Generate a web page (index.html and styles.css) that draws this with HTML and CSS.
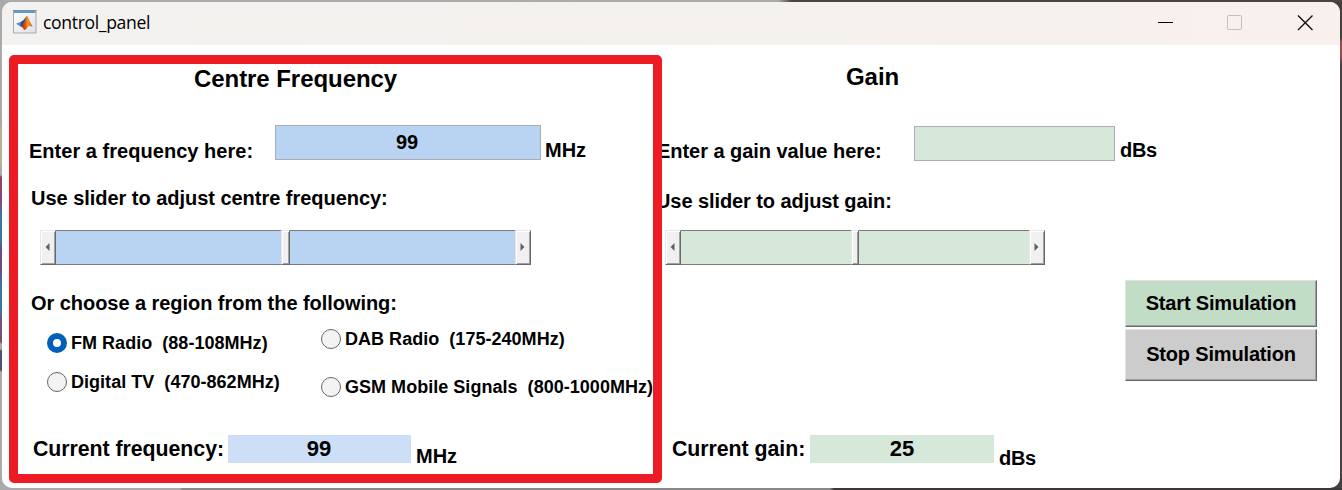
FILE: index.html
```html
<!DOCTYPE html>
<html lang="en">
<head>
<meta charset="utf-8">
<title>control_panel</title>
<link rel="stylesheet" href="styles.css">
</head>
<body>
<main class="window">
  <header class="titlebar">
    <svg class="app-icon" width="24" height="24" viewBox="0 0 24 24">
      <defs>
        <linearGradient id="tile" x1="0" y1="0" x2="1" y2="1"><stop offset="0" stop-color="#fff"/><stop offset="1" stop-color="#dde1e6"/></linearGradient>
        <linearGradient id="flame" x1="0" y1="0" x2="1" y2="0"><stop offset="0" stop-color="#8c1f12"/><stop offset=".4" stop-color="#d9531c"/><stop offset=".62" stop-color="#f5a12c"/><stop offset="1" stop-color="#c63a17"/></linearGradient>
      </defs>
      <rect x=".5" y=".5" width="22.500" height="22.500" fill="url(#tile)" stroke="#a5a9ae"/>
      <rect x="0" y="0" width="23.500" height="1" fill="#7d8f9f"/>
      <rect x="1" y="1" width="21.500" height="2" fill="#5f9bc8"/>
      <path d="M3 13.800 8 11.800 10.500 14 7.500 16.500Z" fill="#4a8fc0"/>
      <path d="M8 11.800C10.500 11 12 8 13.800 6L12 15.500 7.500 16.500Z" fill="#264f88"/>
      <path d="M13.800 5.800C15.500 6.500 17 13 19.700 17 17.500 15.800 15.800 15.500 14.300 18 13 19.500 12 20 11 20 10 17.800 9 16.300 7.500 16.500 11.300 14.500 12.300 8 13.800 5.800Z" fill="url(#flame)"/>
    </svg>
    <span class="caption">control_panel</span>
    <svg class="window-buttons" width="160" height="20" viewBox="0 0 160 20">
      <path d="M3 10.500H18" stroke="#000"/>
      <rect x="72.500" y="3.500" width="14" height="14" rx="1" fill="none" stroke="#c3bfbc"/>
      <path d="M143 3.500 157.500 18M157.500 3.500 143 18" stroke="#111" stroke-width="1.400"/>
    </svg>
  </header>

  <div class="content">
    <section class="panel frequency">
      <h2 class="heading">Centre Frequency</h2>
      <div class="entry-row">
        <span class="label">Enter a frequency here:</span>
        <div class="field">99</div>
        <span class="unit">MHz</span>
      </div>
      <div class="label slider-label">Use slider to adjust centre frequency:</div>
      <div class="slider">
        <span class="cap"><svg width="5" height="8"><path d="M4.500 0V8L.5 4Z" fill="#606060"/></svg></span>
        <span class="track"></span><span class="thumb"></span><span class="track"></span>
        <span class="cap"><svg width="5" height="8"><path d="M.5 0V8L4.500 4Z" fill="#606060"/></svg></span>
      </div>
      <div class="label choose">Or choose a region from the following:</div>
      <div class="regions">
        <div class="column first">
          <div class="option"><span class="radio checked"></span>FM Radio  (88-108MHz)</div>
          <div class="option"><span class="radio"></span>Digital TV  (470-862MHz)</div>
        </div>
        <div class="column second">
          <div class="option"><span class="radio"></span>DAB Radio  (175-240MHz)</div>
          <div class="option"><span class="radio"></span>GSM Mobile Signals  (800-1000MHz)</div>
        </div>
      </div>
      <div class="current-row">
        <span class="current-label">Current frequency:</span>
        <output class="readout">99</output>
        <span class="unit">MHz</span>
      </div>
    </section>

    <section class="panel gain">
      <h2 class="heading">Gain</h2>
      <div class="entry-row">
        <span class="label">Enter a gain value here:</span>
        <div class="field"></div>
        <span class="unit">dBs</span>
      </div>
      <div class="label slider-label">Use slider to adjust gain:</div>
      <div class="slider">
        <span class="cap"><svg width="5" height="8"><path d="M4.500 0V8L.5 4Z" fill="#606060"/></svg></span>
        <span class="track"></span><span class="thumb"></span><span class="track"></span>
        <span class="cap"><svg width="5" height="8"><path d="M.5 0V8L4.500 4Z" fill="#606060"/></svg></span>
      </div>
      <div class="actions">
        <button class="action start">Start Simulation</button>
        <button class="action stop">Stop Simulation</button>
      </div>
      <div class="current-row">
        <span class="current-label">Current gain:</span>
        <output class="readout">25</output>
        <span class="unit">dBs</span>
      </div>
    </section>
  </div>
  <div class="highlight"></div>
</main>
</body>
</html>
```

FILE: styles.css
```css
* { box-sizing: border-box; }
body {
  margin: 0;
  padding: 2px;
  height: 490px;
  overflow: hidden;
  background:
    linear-gradient(90deg, #aaa 0 58%, #494542 59% 100%) 0 0 / 100% 2px no-repeat,
    linear-gradient(90deg, #aaa 0 180px, #888 182px 830px, #3c383a 834px 100%) 0 100% / 100% 2px no-repeat,
    linear-gradient(#aaa 0 125px, #b4b397 128px 165px, #aaa 167px 175px, #8b4575 177px 200px, #3778a0 215px 240px, #6b4b80 250px 270px, #3778a0 285px 310px, #765078 320px 342px, #aaa 344px 349px, #50506e 351px 370px, #aaa 372px) 0 0 / 12px 100% no-repeat,
    linear-gradient(#453e3d 0 38px, #a34850 42px 55px, #464044 65px 100%) 100% 0 / 12px 100% no-repeat;
  font-family: "Liberation Sans", Arial, sans-serif;
  font-weight: bold;
  color: #000;
}
.window {
  position: relative;
  display: flex;
  flex-direction: column;
  width: 1338px;
  height: 486px;
  border-radius: 10px;
  overflow: hidden;
  background: #fff;
}
.titlebar {
  display: flex;
  align-items: center;
  height: 43px;
  padding: 0 25px 0 11px;
  background: linear-gradient(90deg, #f3f2f0, #f5f1ec 60%, #f8f0ed);
}
.app-icon { margin-bottom: 3px; }
.caption {
  margin: 0 0 3px 6px;
  font: 17.600px/24px "Open Sans", sans-serif;
  letter-spacing: -0.350px;
}
.window-buttons { margin: 0 0 4px auto; }
.content { display: flex; height: 443px; }
.panel { display: flex; flex-direction: column; white-space: pre; }
.frequency { width: 653px; }
.gain { width: 685px; }
.heading { margin: 0; font-size: 24px; line-height: 28px; letter-spacing: -0.060px; }
.label, .unit { font-size: 20px; line-height: 24px; }
.entry-row, .current-row { display: flex; align-items: flex-start; }
.field {
  height: 35px;
  padding: 4px 2px 0 0;
  border: 1px solid #abadb3;
  font-size: 20px;
  line-height: 24px;
  text-align: center;
}
.frequency .heading { padding: 20px 0 0 192px; height: 80px; }
.frequency .entry-row { height: 61px; padding-left: 27px; }
.frequency .entry-row .label { width: 246px; margin-top: 14px; letter-spacing: 0.030px; }
.frequency .field { width: 266px; background: #b9d4f3; }
.frequency .entry-row .unit { margin: 13px 0 0 4px; }
.frequency .slider-label { height: 44px; padding-left: 29px; letter-spacing: -0.030px; }
.frequency .slider { width: 491px; margin-left: 38px; }
.frequency .track { background: #b9d4f3; }

.gain .heading { padding: 18px 0 0 191px; height: 81px; }
.gain .entry-row { height: 63px; }
.gain .entry-row .label { width: 257px; margin-top: 13px; padding-left: 2px; letter-spacing: -0.040px; }
.gain .field { width: 201px; margin-left: 2px; background: #d6e8da; }
.gain .entry-row .unit { margin: 12px 0 0 5px; letter-spacing: -0.300px; }
.gain .slider-label { height: 41px; padding-left: 1px; letter-spacing: -0.080px; }
.gain .slider { width: 380px; margin-left: 10px; }
.gain .track { background: #d6e8da; }
.gain .thumb { width: 8px; margin-right: -1px; z-index: 1; }
.gain .thumb + .track { margin-left: 1px; }

.slider { display: flex; height: 35px; }
.track { flex: 1; border: solid #7b7b7b; border-width: 1px 0; }
.cap, .thumb {
  display: flex;
  align-items: center;
  justify-content: center;
  border: 1px solid;
  border-color: #e6e6e6 #696969 #696969 #e6e6e6;
  background: #f0f0f0;
  box-shadow: inset 1px 1px #fff, inset -1px -1px #a0a0a0;
}
.cap { width: 16px; padding: 0 1px 2px 0; }
.thumb { width: 9px; }

.choose { margin-top: 26px; padding-left: 29px; height: 38px; letter-spacing: -0.050px; }
.regions { display: flex; height: 106px; padding-left: 45px; }
.column { display: flex; flex-direction: column; }
.first { width: 274px; gap: 19px; padding-top: 4px; }
.second { gap: 28px; }
.option { display: flex; gap: 4px; height: 20px; font-size: 18px; line-height: 20px; letter-spacing: 0.030px; }
.radio {
  width: 20px;
  height: 20px;
  border: 1px solid #666;
  border-radius: 50%;
  background: #f3f3f3;
}
.checked { border: 6px solid #005fb8; background: #fff; }

.current-label { font-size: 21.300px; line-height: 24px; padding-top: 2px; letter-spacing: -0.040px; }
.readout { height: 28px; font-size: 22px; line-height: 28px; text-align: center; }
.frequency .current-row { padding-left: 31px; }
.frequency .current-label { width: 195px; }
.frequency .readout { width: 183px; padding-right: 1px; background: #cddff7; }
.current-row .unit { margin: 9px 0 0 5px; }
.gain .current-row { padding-left: 17px; }
.gain .current-label { width: 138px; }
.gain .readout { width: 184px; background: #d6e8da; }
.gain .current-row .unit { margin-top: 11px; letter-spacing: -0.300px; }

.actions {
  display: flex;
  flex-direction: column;
  gap: 2px;
  height: 170px;
  padding: 15px 0 0 470px;
}
.action {
  width: 192px;
  padding: 0 0 3px;
  border: 1px solid;
  border-color: #e3e3e3 #696969 #696969 #e3e3e3;
  box-shadow: inset -1px -1px #a0a0a0;
  color: #000;
  font: bold 20px/24px "Liberation Sans", Arial, sans-serif;
  letter-spacing: -0.170px;
}
.start { height: 47px; padding-bottom: 1px; background: #c1ddc6; }
.stop { height: 52px; background: #ccc; }

/* Outline drawn over the frequency controls */
.highlight {
  position: absolute;
  left: 7px;
  top: 53px;
  width: 653px;
  height: 428px;
  border: 9px solid #ed1c24;
  border-radius: 5px;
}
```
